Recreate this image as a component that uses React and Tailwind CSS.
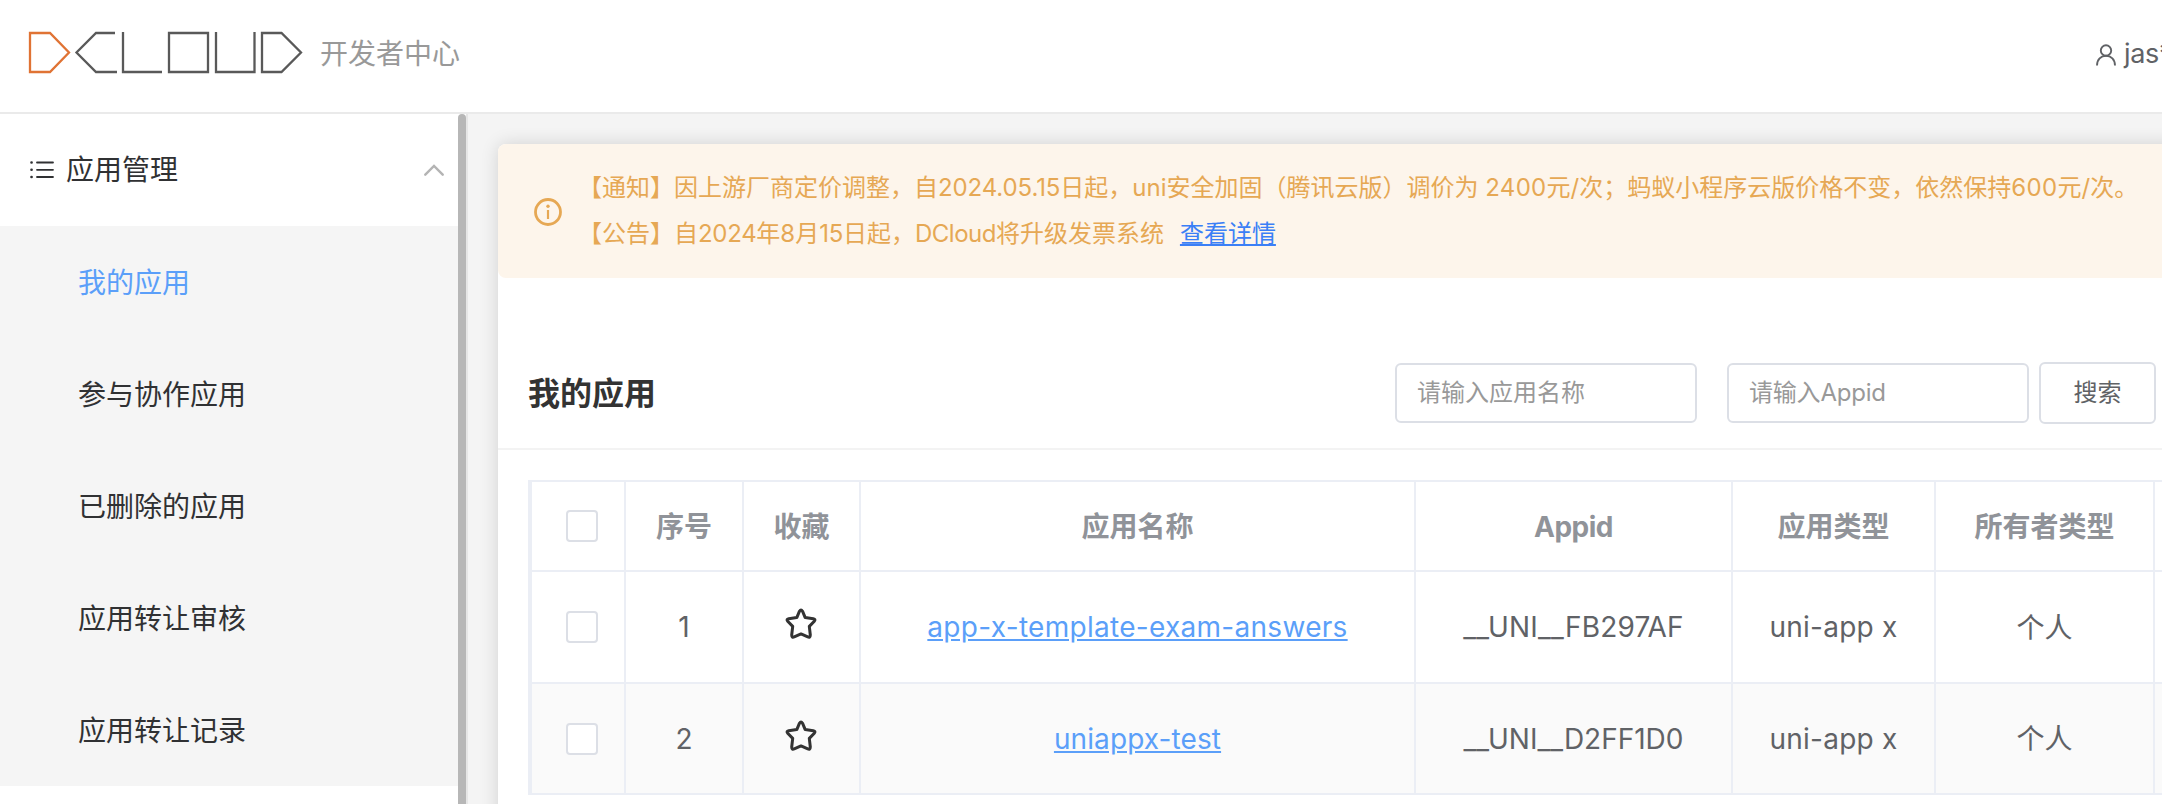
const font = "font-['Inter','Noto_Sans_CJK_SC',sans-serif]";

function Logo() {
  return (
    <svg className="block h-[44px] w-[276px]" viewBox="0 0 276 44" fill="none" strokeWidth="2.300">
      <path d="M2 2H22L41 21.500L22 41H2Z" stroke="#e07334" />
      <path d="M87 2H68L48.500 21.500L68 41H89" stroke="#595959" />
      <path d="M95 1V41H134M141 2H180V41H141ZM188 1V41H226.500V1M234 2H253.500L273 21.500L253.500 41H234Z" stroke="#595959" />
    </svg>
  );
}

function Header() {
  return (
    <header className="flex h-[114px] shrink-0 items-center justify-between border-b-2 border-[#eaeaea] bg-white pb-[6px] pl-[28px]">
      <div className="flex items-center">
        <Logo />
        <span className="ml-[16px] pt-px text-[28px] leading-[40px] text-[#999]">开发者中心</span>
      </div>
      <div className="flex w-[66px] items-center overflow-hidden whitespace-nowrap text-[#606266]">
        <svg className="mt-[4px] h-[22px] w-[20px] shrink-0" viewBox="0 0 20 22" fill="none" stroke="currentColor" strokeWidth="1.900">
          <circle cx="10" cy="6.500" r="5.200" />
          <path d="M1 21.500C1 15.500 5 11.800 10 11.800S19 15.500 19 21.500" />
        </svg>
        <span className="ml-[8px] pt-px text-[27px] leading-[40px] tracking-[-0.3px]">jas*</span>
      </div>
    </header>
  );
}

const menu = ["我的应用", "参与协作应用", "已删除的应用", "应用转让审核", "应用转让记录"];

function Sidebar() {
  return (
    <aside className="flex w-[468px] shrink-0 border-r-2 border-[#e6e6e6] bg-white">
      <nav className="w-[458px]">
        <div className="flex h-[112px] items-center pl-[30px] pr-[14px] text-[#303133]">
          <svg className="h-[18px] w-[24px]" viewBox="0 0 24 18" fill="none" stroke="currentColor" strokeWidth="1.800" strokeLinecap="round">
            <path d="M7 1.500H23M7 8.800H23M7 16H23" />
            <path d="M1.500 1.500H1.600M1.500 8.800H1.600M1.500 16H1.600" strokeWidth="2.600" />
          </svg>
          <span className="ml-[12px] grow text-[28px] leading-[40px]">应用管理</span>
          <svg className="h-[12px] w-[20px]" viewBox="0 0 20 12" fill="none" stroke="#b4b4b4" strokeWidth="2.400" strokeLinecap="round">
            <path d="M1.300 10.700L10 2L18.700 10.700" />
          </svg>
        </div>
        <ul className="bg-[#f5f5f5]">
          {menu.map((m, i) => (
            <li key={m} className={`flex h-[112px] items-center pl-[78px] pt-px text-[28px] ${i === 0 ? "text-[#5b9ff9]" : "text-[#303133]"}`}>
              {m}
            </li>
          ))}
        </ul>
      </nav>
      <div className="w-[8px] rounded-t-full bg-[#b7b7b7]" />
    </aside>
  );
}

function Notice() {
  return (
    <div className="flex h-[134px] items-center rounded-[8px] bg-[#fdf5eb] pl-[36px] text-[24px] text-[#e6a854]">
      <svg className="mt-[2px] h-[28px] w-[28px] shrink-0" viewBox="0 0 28 28" fill="none" stroke="currentColor" strokeWidth="2.800">
        <circle cx="14" cy="14" r="12.500" />
        <path d="M14 12V21" strokeWidth="2.200" />
        <circle cx="14" cy="8.300" r="1.700" fill="currentColor" stroke="none" />
      </svg>
      <div className="ml-[16px] whitespace-nowrap leading-[46px]">
        <p>
          【通知】因上游厂商定价调整，自<span className="tracking-[-0.1px]">2024.05.15</span>日起，uni安全加固（腾讯云版）调价为 <span className="tracking-[0.3px]">2400</span>元/次；蚂蚁小程序云版价格不变，依然保持<span className="tracking-[0.4px]">600</span>元/次。
        </p>
        <p>
          【公告】自<span className="tracking-[-0.3px]">2024</span>年8月<span className="tracking-[-0.3px]">15</span>日起，<span className="tracking-[-0.5px]">DCloud</span>将升级发票系统
          <a className="ml-[16px] text-[#3b7ff6] underline">查看详情</a>
        </p>
      </div>
    </div>
  );
}

function Toolbar() {
  return (
    <div className="flex h-[172px] items-center border-b-2 border-[#f3f3f3] pl-[30px] pt-[60px] text-[24px]">
      <h1 className="w-[867px] pt-[2px] text-[32px] font-bold text-[#333]">我的应用</h1>
      <div className="flex h-[60px] w-[302px] items-center rounded-[6px] border-2 border-[#dcdfe6] pl-[20px] text-[#999]">请输入应用名称</div>
      <div className="ml-[30px] flex h-[60px] w-[302px] items-center rounded-[6px] border-2 border-[#dcdfe6] pl-[20px] tracking-[-0.2px] text-[#999]">请输入Appid</div>
      <button className="ml-[10px] h-[62px] w-[117px] rounded-[6px] border-2 border-[#dcdfe6] text-[#606266]">搜索</button>
    </div>
  );
}

function Star() {
  return (
    <svg className="mb-[6px] mr-px h-[32px] w-[32px]" viewBox="0 0 32 32" fill="none" stroke="#333" strokeWidth="3" strokeLinejoin="round">
      <path d="M14.500 3.200Q16 0.800 17.500 3.200L20.200 9.600L28.300 10.700Q31 11.300 29.300 13.300L24.300 18.400L25.300 27Q25.200 30 22.800 28.900L16 25.900L9.200 28.900Q6.800 30 6.700 27L7.700 18.400L2.700 13.300Q1 11.300 3.700 10.700L11.800 9.600Z" />
    </svg>
  );
}

const Check = () => <span className="ml-[8px] h-[32px] w-[32px] rounded-[4px] border-2 border-[#dcdfe6] bg-white" />;

const cols = "grid grid-cols-[94px_118px_117px_555px_317px_203px_219px_60px]";
const cell = "flex items-center justify-center border-r-2 border-b-2 border-[#ebeef5] whitespace-nowrap";

const rows = [
  { n: 1, name: "app-x-template-exam-answers", id: "__UNI__FB297AF" },
  { n: 2, name: "uniappx-test", id: "__UNI__D2FF1D0" },
];
const heads = ["序号", "收藏", "应用名称", "Appid", "应用类型", "所有者类型", ""];

function Table() {
  return (
    <div className="ml-[30px] mt-[30px] border-l-4 border-t-2 border-[#ebeef5] text-[28px] text-[#606266]">
      <div className={`${cols} h-[90px] font-bold text-[#909399]`}>
        <div className={cell}><Check /></div>
        {heads.map((h) => (
          <div key={h} className={`${cell} pt-[2px] ${h === "Appid" ? "tracking-[-0.5px]" : ""}`}>{h}</div>
        ))}
      </div>
      {rows.map((r, i) => (
        <div key={r.n} className={`${cols} ${i ? "h-[111px] bg-[#fafafa]" : "h-[112px] bg-white"}`}>
          <div className={cell}><Check /></div>
          <div className={cell}>{r.n}</div>
          <div className={cell}><Star /></div>
          <div className={cell}><a className={`text-[#5b9ff9] underline ${i ? "tracking-[0.1px]" : "tracking-[0.29px]"}`}>{r.name}</a></div>
          <div className={`${cell} ${i ? "" : "tracking-[0.2px]"}`}>{r.id}</div>
          <div className={`${cell} tracking-[0.25px]`}>uni-app x</div>
          <div className={`${cell} ${i ? "" : "pt-[2px]"}`}>个人</div>
          <div className={cell} />
        </div>
      ))}
    </div>
  );
}

export default function App() {
  return (
    <div className={`flex h-[804px] w-[2162px] flex-col overflow-hidden bg-[#f4f4f4] ${font}`}>
      <Header />
      <div className="flex h-[690px]">
        <Sidebar />
        <main className="grow overflow-hidden pl-[30px] pt-[30px]">
          <section className="h-[900px] w-[1900px] rounded-[8px] bg-white shadow-[0_0_18px_rgba(0,0,0,0.14)]">
            <Notice />
            <Toolbar />
            <Table />
          </section>
        </main>
      </div>
    </div>
  );
}
